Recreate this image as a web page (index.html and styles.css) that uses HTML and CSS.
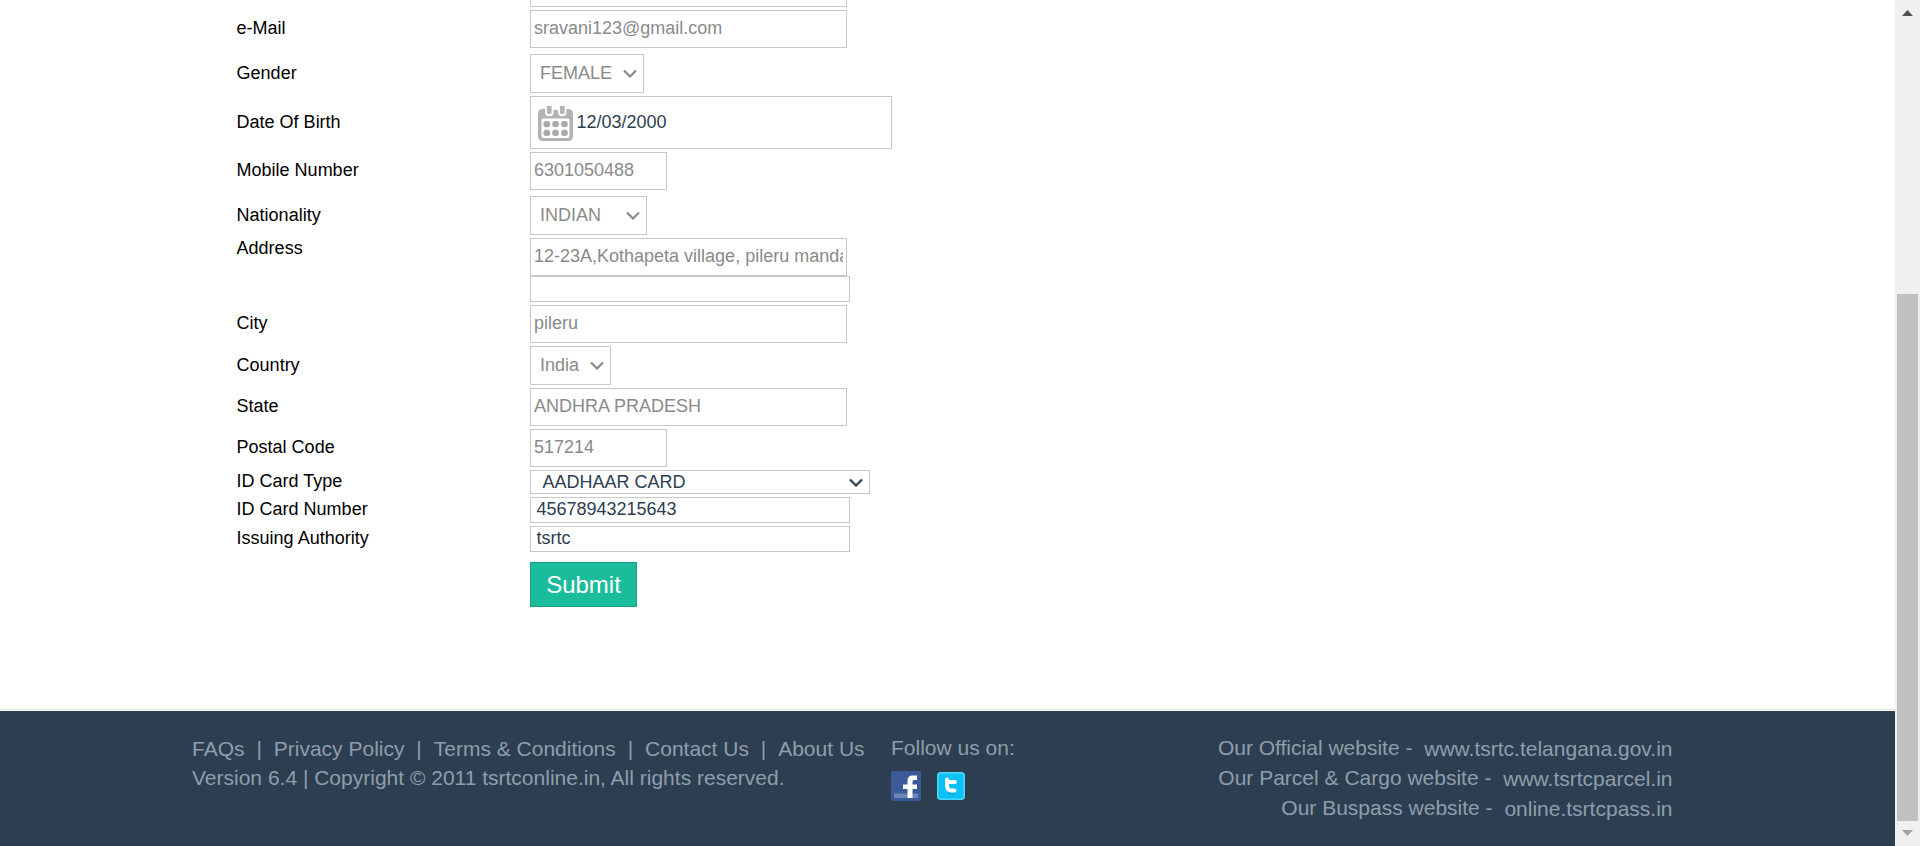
FILE: index.html
```
<!DOCTYPE html>
<html lang="en">
<head>
<meta charset="utf-8">
<title>Profile</title>
<link rel="stylesheet" href="styles.css">
</head>
<body>
<div class="page">
  <main class="form">
    <div class="row first"><div class="label"></div><div class="box wide"></div></div>
    <div class="row std gap6"><div class="label">e-Mail</div><div class="box wide">sravani123@gmail.com</div></div>
    <div class="row sel"><div class="label">Gender</div><div class="box w114">FEMALE<svg class="chev" viewBox="0 0 14 9"><path d="M1 1.5l6 6 6-6"/></svg></div></div>
    <div class="row dob"><div class="label">Date Of Birth</div><div class="box active"><svg class="cal" viewBox="0 0 35 35"><path fill="#b3b3b3" fill-rule="evenodd" d="M5 3H30Q35 3 35 8V30Q35 35 30 35H5Q0 35 0 30V8Q0 3 5 3ZM5 12.5Q3.5 12.5 3.5 14V29.5Q3.5 32 6 32H29Q31.5 32 31.5 29.5V14Q31.5 12.5 30 12.5Z"/><path fill="#fff" d="M15.500 0H20V5H15.500Z"/><g stroke="#fff" stroke-width="1.8" fill="#b3b3b3"><rect x="8" y="-2" width="6.5" height="11" rx="2.5"/><rect x="21" y="-2" width="6.5" height="11" rx="2.5"/></g><path fill="#b3b3b3" d="M16 4H19.500V9H16Z"/><g fill="#aaa"><rect x="5.500" y="15" width="6.500" height="6.2" rx="2.5"/><rect x="14.300" y="15" width="6.500" height="6.2" rx="2.5"/><rect x="23.200" y="15" width="6.500" height="6.2" rx="2.5"/><rect x="5.500" y="23.8" width="6.500" height="6.2" rx="2.5"/><rect x="14.300" y="23.8" width="6.500" height="6.2" rx="2.5"/><rect x="23.200" y="23.8" width="6.500" height="6.2" rx="2.5"/></g></svg><span>12/03/2000</span></div></div>
    <div class="row std gap6"><div class="label">Mobile Number</div><div class="box short">6301050488</div></div>
    <div class="row sel"><div class="label">Nationality</div><div class="box w117">INDIAN<svg class="chev" viewBox="0 0 14 9"><path d="M1 1.5l6 6 6-6"/></svg></div></div>
    <div class="row std address"><div class="label">Address</div><div><input class="box wide" type="text" value="12-23A,Kothapeta village, pileru mandal" disabled><div class="box extra"></div></div></div>
    <div class="row std"><div class="label">City</div><div class="box wide">pileru</div></div>
    <div class="row sel"><div class="label">Country</div><div class="box w81">India<svg class="chev" viewBox="0 0 14 9"><path d="M1 1.5l6 6 6-6"/></svg></div></div>
    <div class="row std"><div class="label">State</div><div class="box wide">ANDHRA PRADESH</div></div>
    <div class="row std"><div class="label">Postal Code</div><div class="box short">517214</div></div>
    <div class="row idtype"><div class="label">ID Card Type</div><div class="box active">AADHAAR CARD<svg class="chev" viewBox="0 0 14 9"><path d="M1 1.5l6 6 6-6"/></svg></div></div>
    <div class="row slim"><div class="label">ID Card Number</div><div class="box active">45678943215643</div></div>
    <div class="row slim"><div class="label">Issuing Authority</div><div class="box active">tsrtc</div></div>
    <button class="submit">Submit</button>
  </main>
  <footer class="footer">
    <div class="legal">
      <nav class="links"><a>FAQs</a><i>|</i><a>Privacy Policy</a><i>|</i><a>Terms &amp; Conditions</a><i>|</i><a>Contact Us</a><i>|</i><a>About Us</a></nav>
      <p>Version 6.4 | Copyright © 2011 tsrtconline.in, All rights reserved.</p>
    </div>
    <div class="follow">
      <p>Follow us on:</p>
      <div class="social">
        <svg width="30" height="30" viewBox="0 0 30 30"><rect width="30" height="30" rx="2" fill="#3d5a98"/><path fill="#7085b7" d="M3 22.5H27V27H3Z"/><path fill="#fff" d="M16.500 27V18H12V13.500H16.500V10Q16.500 4.500 21.500 4.500H26V9H23Q21.500 9 21.500 11V13.500H26V18H21.500V27Z"/></svg>
        <svg width="28" height="28" viewBox="0 0 28 28"><rect x=".75" y=".75" width="26.5" height="26.5" rx="3" fill="#0cc0f6" stroke="#4ad8fa" stroke-width="1.5"/><path fill="none" stroke="#1ea0d0" stroke-width="2" stroke-linecap="round" d="M12 21.500H17"/><path fill="none" stroke="#fff" stroke-width="3.8" stroke-linecap="round" stroke-linejoin="round" d="M10 7.500V14Q10.500 18.500 14 18.500H17.500M10 10H18"/></svg>
      </div>
    </div>
    <div class="sites">
      <p>Our Official website - <a>www.tsrtc.telangana.gov.in</a></p>
      <p>Our Parcel &amp; Cargo website - <a>www.tsrtcparcel.in</a></p>
      <p>Our Buspass website - <a>online.tsrtcpass.in</a></p>
    </div>
  </footer>
</div>
<aside class="scroll">
  <svg class="up" viewBox="0 0 11 6"><path d="M0 6L5.500 0L11 6Z"/></svg>
  <div class="thumb"></div>
  <svg class="down" viewBox="0 0 11 6"><path d="M0 0H11L5.500 6Z"/></svg>
</aside>
</body>
</html>
```
FILE: styles.css
```
* { box-sizing: border-box; }
body {
  margin: 0;
  height: 846px;
  overflow: hidden;
  display: flex;
  background: #fff;
  font: 18px/20px "Liberation Sans", Arial, sans-serif;
  color: #000;
}
p { margin: 0; }
svg { display: block; flex: none; }
.page { width: 1895px; display: flex; flex-direction: column; }
.form { height: 709px; padding-left: 236.6px; }
.row { display: grid; grid-template-columns: 293.4px max-content; align-items: start; margin-bottom: 3px; }
.gap6 { margin-bottom: 6px; }
.label { padding-top: 8px; }
.box {
  border: 1px solid #c8c8c8;
  height: 38px;
  padding: 7px 3px 0;
  overflow: hidden;
  white-space: nowrap;
  color: #8a8a8a;
}
.box.active { color: #2c3e50; }
.wide { width: 317px; }
.short { width: 137px; }
.first .box { height: 7px; border-top: 0; padding-top: 0; }
.row.first { height: 7px; }
.first .label { padding-top: 0; }
.address .label { padding-top: 0; }
input.box {
  display: block;
  margin: 0;
  padding: 0 3px 2px;
  border-radius: 0;
  background: #fff;
  font: inherit;
}
.box.extra { width: 320px; height: 26px; }
.sel .label { padding-top: 9px; }
.sel .box { height: 39px; padding: 8px 6px 0 9px; display: flex; justify-content: space-between; }
.w114 { width: 114px; }
.w117 { width: 117px; }
.w81 { width: 81px; }
.chev { width: 14px; height: 9px; margin-top: 6px; fill: none; stroke: currentColor; stroke-width: 2.2; }
.dob .label { padding-top: 16px; }
.dob .box { width: 362px; height: 53px; padding: 9px 0 0 7px; display: flex; gap: 3.5px; }
.dob span { padding-top: 6px; }
.cal { width: 35px; height: 35px; }
.idtype .label { padding-top: 1px; }
.idtype .box { width: 340px; height: 24px; padding: 1px 6px 0 11.5px; display: flex; justify-content: space-between; }
.slim .label { padding-top: 2px; }
.slim .box { width: 320px; height: 26px; padding: 1px 5.5px 0; }
.submit {
  display: block;
  margin: 10px 0 0 293.4px;
  width: 107px;
  height: 45px;
  padding: 0;
  border: 1px solid #16a085;
  background: #1abc9c;
  color: #fff;
  font: 24px/28px "Liberation Sans", Arial, sans-serif;
}
.footer {
  height: 137px;
  border-top: 1px solid #dde4e6;
  box-shadow: inset 0 1px #fff, inset 0 -1px #2c3350;
  background: #2d3e50;
  padding: 23px 0 0 192px;
  display: flex;
  font-size: 21px;
  line-height: 30px;
  color: #8d9eac;
}
.legal { width: 699px; white-space: nowrap; }
.links { display: flex; gap: 11.9px; height: 30px; padding-top: 1px; }
.links i { font-style: normal; }
.follow { width: 200px; }
.social { display: flex; align-items: center; gap: 16px; margin-top: 8px; }
.sites { width: 581.5px; text-align: right; }
.sites a { margin-left: 6px; position: relative; top: 1px; }
.scroll { width: 25px; background: #f0f0f0; display: flex; flex-direction: column; align-items: center; padding-top: 10px; }
.up { width: 11px; height: 6px; fill: #505050; }
.thumb { width: 21px; height: 527px; background: #c1c1c1; margin-top: 278px; }
.down { width: 11px; height: 6px; fill: #a3a3a3; margin-top: 9px; }
```
